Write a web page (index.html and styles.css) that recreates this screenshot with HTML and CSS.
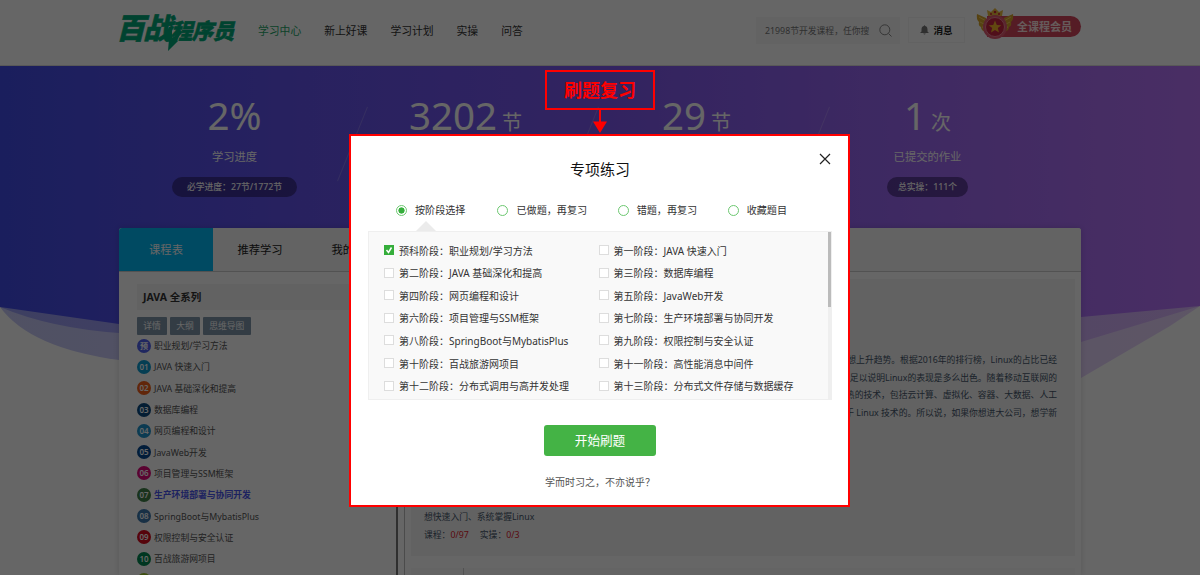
FILE: index.html
```html
<!DOCTYPE html>
<html lang="zh-CN">
  <head>
    <meta charset="UTF-8" />
    <title>百战程序员</title>
    <link rel="stylesheet" href="styles.css">
  </head>
  <body>
    <header class="header">
      <div class="logo">
        <span class="logo-big">百战</span><span class="logo-small">程序员</span>
        <svg class="logo-bolt" width="18" height="24" viewBox="0 0 18 24">
          <path d="M4 0 L7 0 L7 11 L17 5 L11 14 L13 14 L3 24 L4 12 L0 13 Z" fill="#00a878" />
        </svg>
      </div>
      <nav class="nav">
        <a class="active">学习中心</a>
        <a>新上好课</a>
        <a>学习计划</a>
        <a>实操</a>
        <a>问答</a>
      </nav>
      <div class="search">
        <span>21998节开发课程，任你搜</span>
        <svg width="13" height="13" viewBox="0 0 13 13" fill="none" stroke="#888">
          <circle cx="5.8" cy="5.8" r="5" />
          <path d="M9.5 9.5 L12.5 12.5" />
        </svg>
      </div>
      <div class="message">
        <svg width="9" height="10" viewBox="0 0 9 10" fill="#777">
          <path d="M4.5 0 L5.2 1 C7 1.4 7.5 3 7.5 4.5 V6.5 L9 8 H0 L1.5 6.5 V4.5 C1.5 3 2 1.4 3.8 1 Z M3.2 8.6 H5.8 Q4.5 10.6 3.2 8.6 Z" />
        </svg>
        <span>消息</span>
      </div>
      <div class="member">
        <svg class="medal" width="38" height="32" viewBox="0 0 38 32">
          <path d="M1 6 L10 10 L10 24 Q5 23 5 19 Q2 18 3 14 Q0 11 1 6 Z" fill="#d8a62c" />
          <path d="M37 6 L28 10 L28 24 Q33 23 33 19 Q36 18 35 14 Q38 11 37 6 Z" fill="#d8a62c" />
          <path d="M3 9 L10 13 M4 14 L10 17 M6 19 L11 20 M35 9 L28 13 M34 14 L28 17 M32 19 L27 20" stroke="#f4cf62" />
          <path d="M12 8 L11 2 L15 4 L19 0 L23 4 L27 2 L26 8 Z" fill="#e9b93c" />
          <circle cx="19" cy="4" r="1.3" fill="#c23" />
          <circle cx="15" cy="6" r="1" fill="#c23" />
          <circle cx="23" cy="6" r="1" fill="#c23" />
          <circle cx="19" cy="19" r="12" fill="#e05a72" />
          <circle cx="19" cy="19" r="9.5" fill="#c92742" stroke="#ee8394" />
          <path d="M19 12.5 L20.8 17 L25.3 17.2 L21.8 20.1 L23 24.6 L19 22.1 L15 24.6 L16.2 20.1 L12.7 17.2 L17.2 17 Z" fill="#f6b429" />
        </svg>
        <span>全课程会员</span>
      </div>
    </header>

    <main class="main">
      <svg class="hero-bg" width="1200" height="320" viewBox="0 0 1200 320">
        <defs>
          <linearGradient id="sky" x1="0" x2="1" y1="0" y2="0">
            <stop offset="0" stop-color="#424de8" />
            <stop offset="0.12" stop-color="#5350ec" />
            <stop offset="0.25" stop-color="#6454ee" />
            <stop offset="0.5" stop-color="#7d58f0" />
            <stop offset="0.75" stop-color="#9c68f4" />
            <stop offset="1" stop-color="#b874fa" />
          </linearGradient>
        </defs>
        <path d="M0 241 Q30 282 119 294 L240 300 L1081 312 L1170 260 L1200 240 V0 H0 Z" fill="url(#sky)" opacity="0.3" />
        <path d="M0 241 Q50 262 119 267 L240 280 L1081 276 L1200 240 V0 H0 Z" fill="url(#sky)" opacity="0.35" />
        <path d="M0 241 L119 258 L400 270 L1081 251 L1200 240 V0 H0 Z" fill="url(#sky)" />
      </svg>

      <section class="stats">
        <div class="stat">
          <p class="number">2%</p>
          <p class="label">学习进度</p>
          <span class="pill wide">必学进度：27节/1772节</span>
        </div>
        <div class="stat">
          <p class="number">3202<small>节</small></p>
          <p class="label">已学课程</p>
        </div>
        <div class="stat">
          <p class="number">29<small>节</small></p>
          <p class="label">今日学习</p>
        </div>
        <div class="stat">
          <p class="number">1<small>次</small></p>
          <p class="label">已提交的作业</p>
          <span class="pill">总实操：111个</span>
        </div>
      </section>

      <section class="card">
        <div class="tabs">
          <a class="tab active">课程表</a>
          <a class="tab">推荐学习</a>
          <a class="tab">我的课程</a>
        </div>
        <div class="card-body">
          <aside class="side">
            <h3>JAVA 全系列</h3>
            <div class="tags">
              <span>详情</span>
              <span>大纲</span>
              <span>思维导图</span>
            </div>
            <ul class="stages">
              <li><i class="c0">预</i>职业规划/学习方法</li>
              <li><i class="c1">01</i>JAVA 快速入门</li>
              <li><i class="c2">02</i>JAVA 基础深化和提高</li>
              <li><i class="c3">03</i>数据库编程</li>
              <li><i class="c4">04</i>网页编程和设计</li>
              <li><i class="c5">05</i>JavaWeb开发</li>
              <li><i class="c6">06</i>项目管理与SSM框架</li>
              <li class="current"><i class="c7">07</i>生产环境部署与协同开发</li>
              <li><i class="c8">08</i>SpringBoot与MybatisPlus</li>
              <li><i class="c9">09</i>权限控制与安全认证</li>
              <li><i class="c10">10</i>百战旅游网项目</li>
              <li><i class="c11"></i></li>
            </ul>
          </aside>
          <div class="side-scroll"></div>
          <div class="content">
            <article class="course">
              <div class="intro">
                <p>想上升趋势。根据2016年的排行榜，Linux的占比已经</p>
                <p>充足以说明Linux的表现是多么出色。随着移动互联网的</p>
                <p>热的技术，包括云计算、虚拟化、容器、大数据、人工</p>
                <p>于 Linux 技术的。所以说，如果你想进大公司，想学新</p>
              </div>
              <div class="summary">
                <p>想快速入门、系统掌握Linux</p>
                <p>课程：<b>0/97</b><span class="practice">实操：<b>0/3</b></span></p>
              </div>
            </article>
            <article class="next"><div></div></article>
          </div>
        </div>
      </section>
    </main>

    <div class="mask"></div>

    <div class="callout">刷题复习</div>
    <svg class="arrow" width="16" height="24" viewBox="0 0 16 24" fill="#f00">
      <path d="M7 0 H9 V12.5 H15 L8 24 L1 12.5 H7 Z" />
    </svg>

    <div class="modal">
      <svg class="close" width="12" height="12" viewBox="0 0 12 12" stroke="#222" stroke-width="1.2">
        <path d="M1 1 L11 11 M11 1 L1 11" />
      </svg>
      <h2>专项练习</h2>
      <div class="radios">
        <label class="checked"><i></i>按阶段选择</label>
        <label><i></i>已做题，再复习</label>
        <label><i></i>错题，再复习</label>
        <label><i></i>收藏题目</label>
      </div>
      <div class="options">
        <label><i class="on"><svg width="10" height="10" viewBox="0 0 10 10" fill="none" stroke="#fff" stroke-width="1.5"><path d="M2.5 5 L4.5 7.5 L7.5 2.5" /></svg></i>预科阶段：职业规划/学习方法</label>
        <label><i></i>第一阶段：JAVA 快速入门</label>
        <label><i></i>第二阶段：JAVA 基础深化和提高</label>
        <label><i></i>第三阶段：数据库编程</label>
        <label><i></i>第四阶段：网页编程和设计</label>
        <label><i></i>第五阶段：JavaWeb开发</label>
        <label><i></i>第六阶段：项目管理与SSM框架</label>
        <label><i></i>第七阶段：生产环境部署与协同开发</label>
        <label><i></i>第八阶段：SpringBoot与MybatisPlus</label>
        <label><i></i>第九阶段：权限控制与安全认证</label>
        <label><i></i>第十阶段：百战旅游网项目</label>
        <label><i></i>第十一阶段：高性能消息中间件</label>
        <label><i></i>第十二阶段：分布式调用与高并发处理</label>
        <label><i></i>第十三阶段：分布式文件存储与数据缓存</label>
      </div>
      <button class="start-btn">开始刷题</button>
      <p class="motto">学而时习之，不亦说乎？</p>
    </div>
  </body>
</html>
```
FILE: styles.css
```css
* {
  box-sizing: border-box;
}

body {
  margin: 0;
  height: 575px;
  overflow: hidden;
  position: relative;
  background-color: #fff;
  color: #333;
  font-family: "Noto Sans", "Noto Sans CJK SC", sans-serif;
  font-size: 8.8px;
}

p,
h2,
h3,
ul {
  margin: 0;
  padding: 0;
}

i {
  font-style: normal;
}

.header {
  display: flex;
  align-items: flex-start;
  height: 66px;
  padding-left: 119px;
  border-bottom: 1px solid #ddd;
}

/* logo */
.logo {
  position: relative;
  width: 139px;
  margin-top: 10px;
  color: #00a878;
  font-family: "Noto Sans CJK SC", sans-serif;
  font-weight: 900;
  line-height: 33px;
  white-space: nowrap;
}

.logo span {
  display: inline-block;
  transform: skewX(-14deg);
  -webkit-text-stroke: 0.6px #00a878;
}

.logo-big {
  font-size: 29px;
  letter-spacing: -2px;
}

.logo-small {
  font-size: 21.5px;
  letter-spacing: -0.5px;
}

.logo-bolt {
  position: absolute;
  left: 46px;
  top: 17px;
}

.nav {
  display: flex;
  gap: 23px;
  width: 498px;
  padding-top: 22px;
  font-size: 10.8px;
  line-height: 18px;
}

.nav .active {
  color: #22a566;
}

.search {
  display: flex;
  align-items: center;
  justify-content: space-between;
  width: 144px;
  height: 27px;
  margin-top: 17px;
  padding: 0 8px 0 9px;
  background-color: #f7f7f7;
  color: #777;
}

.message {
  display: flex;
  align-items: center;
  justify-content: center;
  gap: 4px;
  width: 57px;
  height: 26px;
  margin: 17px 12px 0 8px;
  border: 1px solid #f5f5f5;
  color: #222;
  font-size: 9.6px;
  font-weight: bold;
}

.member {
  position: relative;
  width: 104px;
  height: 21px;
  margin-top: 16px;
  padding-left: 40px;
  border-radius: 11px;
  background: linear-gradient(90deg, transparent 10px, #d4465c 10px);
  color: #ffe3e3;
  font-size: 11px;
  font-weight: bold;
  line-height: 21px;
}

.medal {
  position: absolute;
  left: -1px;
  top: -8px;
}

/* banner */
.main {
  position: relative;
}

.hero-bg {
  position: absolute;
  left: 0;
  top: 0;
}

.stats {
  position: relative;
  display: grid;
  grid-template-columns: repeat(4, 231px);
  height: 162px;
  padding-left: 119px;
  color: #fff;
  text-align: center;
}

.stat {
  position: relative;
  padding-top: 29px;
}

/* slanted divider between two stats */
.stat + .stat::before {
  content: "";
  position: absolute;
  left: 2px;
  top: 38px;
  width: 1px;
  height: 80px;
  background-color: rgba(255, 255, 255, 0.2);
  transform: rotate(22deg);
}

.number {
  height: 40px;
  font-size: 38.5px;
  line-height: 40px;
}

.number small {
  margin-left: 5px;
  font-size: 20px;
  line-height: 20px;
}

.label {
  margin-top: 13px;
  font-size: 11.3px;
  line-height: 18px;
}

.pill {
  display: inline-block;
  height: 20px;
  margin-top: 11px;
  padding: 0 11px;
  border-radius: 10px;
  background-color: rgba(30, 15, 70, 0.5);
  font-size: 8.8px;
  font-weight: 500;
  line-height: 20px;
}

.pill.wide {
  padding: 0 15px;
}

/* course card */
.card {
  position: relative;
  width: 962px;
  height: 347px;
  margin-left: 119px;
  border-radius: 3px 3px 0 0;
  background-color: #fff;
  box-shadow: 0 0 6px rgba(0, 0, 0, 0.15);
  overflow: hidden;
}

.tabs {
  display: flex;
  height: 44px;
  border-bottom: 1px solid #ccc;
  background-color: #f7f7f7;
}

.tab {
  width: 94px;
  font-size: 11.3px;
  line-height: 44px;
  text-align: center;
  color: #222;
}

.tab.active {
  background-color: #00b8f5;
  color: #fff;
}

.card-body {
  display: flex;
  height: 303px;
  overflow: hidden;
}

.side {
  width: 277px;
  padding: 12px 0 0 18px;
}

.side h3 {
  height: 26px;
  padding-left: 6px;
  background-color: #f5f5f5;
  font-size: 10.5px;
  line-height: 26px;
}

.tags {
  display: flex;
  gap: 3px;
  margin-top: 7px;
}

.tags span {
  height: 18px;
  padding: 0 6.2px;
  border-radius: 1px;
  background-color: #8096aa;
  color: #fff;
  line-height: 18px;
}

.stages {
  list-style: none;
}

.stages li {
  display: flex;
  align-items: center;
  gap: 3px;
  height: 21.3px;
  color: #555;
}

.stages li i {
  width: 14px;
  height: 14px;
  border-radius: 50%;
  color: #fff;
  font-size: 8px;
  font-weight: 600;
  line-height: 14px;
  text-align: center;
}

.stages .current {
  color: #4a55f0;
  font-weight: bold;
}

.c0 { background-color: #5263f0; }
.c1 { background-color: #0d9cd0; }
.c2 { background-color: #f2601a; }
.c3 { background-color: #0b4a80; }
.c4 { background-color: #1f93cc; }
.c5 { background-color: #074a92; }
.c6 { background-color: #e0087c; }
.c7 { background-color: #3f8048; }
.c8 { background-color: #3c78ac; }
.c9 { background-color: #d80a1c; }
.c10 { background-color: #008850; }
.c11 { background-color: #9cc52c; }

.side-scroll {
  width: 2px;
  height: 303px;
  background-color: #777;
}

.content {
  flex: 1;
  margin-left: 6px;
  padding: 7px 6px 0 6px;
  border-left: 1px solid #bbb;
}

.course {
  height: 277px;
  padding: 73px 18px 0 13px;
  background-color: #f5f5f5;
}

.intro {
  height: 157px;
  color: #45566b;
  line-height: 17.5px;
  text-align: right;
}

.summary {
  color: #45566b;
  line-height: 17.6px;
}

.summary b {
  color: #e0202c;
  font-weight: normal;
}

.practice {
  margin-left: 11px;
}

.next {
  height: 7px;
  margin-top: 12px;
  background-color: #fafafa;
}

.next div {
  width: 53px;
  height: 7px;
  border-right: 1px solid #ccc;
}

.mask {
  position: absolute;
  left: 0;
  top: 0;
  width: 100%;
  height: 100%;
  background-color: rgba(0, 0, 0, 0.6);
}

/* callout over the dialog */
.callout {
  position: absolute;
  left: 545px;
  top: 70px;
  width: 110px;
  height: 40px;
  border: 2px solid #f00;
  color: #f00;
  font-size: 18px;
  font-weight: bold;
  line-height: 36px;
  text-align: center;
}

.arrow {
  position: absolute;
  left: 592px;
  top: 109px;
}

/* dialog */
.modal {
  position: absolute;
  left: 349px;
  top: 134px;
  width: 501px;
  height: 373px;
  padding: 22px 16px 0 17px;
  border: 2px solid #f00;
  background-color: #fff;
  text-align: center;
}

.close {
  position: absolute;
  right: 17px;
  top: 17px;
}

.modal h2 {
  color: #111;
  font-size: 15px;
  font-weight: normal;
  line-height: 22px;
}

.radios {
  display: flex;
  height: 51px;
  padding: 21px 0 0 28px;
  font-size: 10.1px;
  line-height: 18px;
}

.radios label {
  display: flex;
  align-items: center;
  gap: 8px;
  height: 18px;
  margin-right: 30.5px;
  position: relative;
}

.radios i {
  width: 11px;
  height: 11px;
  border: 1px solid #6cc870;
  border-radius: 50%;
}

.radios .checked {
  margin-right: 32px;
}

.radios .checked i {
  background: radial-gradient(circle, #35ae3b 2.8px, #fff 3.4px);
}

.radios .checked::after {
  content: "";
  position: absolute;
  left: 20px;
  top: 20px;
  border: 10px solid transparent;
  border-top: none;
  border-bottom-color: #ebebeb;
}

.options {
  display: grid;
  grid-template-columns: 214.5px 1fr;
  grid-auto-rows: 22.55px;
  height: 169px;
  padding: 7px 0 0 15px;
  border: 1px solid #efefef;
  background: linear-gradient(#bbb, #bbb) right top / 3px 75px no-repeat, linear-gradient(#efefef, #efefef) right top / 3px 100% no-repeat, #f9f9f9;
  font-size: 10px;
}

.options label {
  display: flex;
  align-items: center;
  gap: 5px;
}

.options i {
  width: 10px;
  height: 10px;
  border: 1px solid #ddd;
  background-color: #fff;
}

.options .on {
  display: flex;
  border: none;
  background-color: #35ae3b;
}

.start-btn {
  width: 112px;
  height: 31px;
  margin-top: 25px;
  padding: 0;
  border: none;
  border-radius: 3px;
  background-color: #44b345;
  color: #fff;
  font-family: inherit;
  font-size: 12.6px;
  line-height: 31px;
}

.motto {
  margin-top: 17px;
  color: #555;
  font-size: 10px;
  line-height: 18px;
}
```
